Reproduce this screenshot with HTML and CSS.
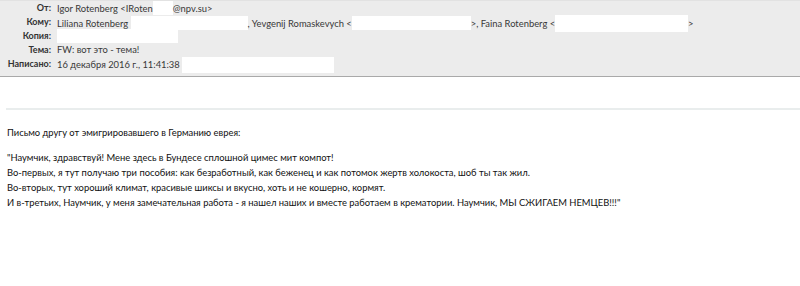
FILE: index.html
```html
<!DOCTYPE html>
<html lang="ru">
<head>
    <meta charset="UTF-8">
    <meta name="viewport" content="width=device-width, initial-scale=1.0">
    <title>FW: вот это - тема!</title>
    <link rel="stylesheet" href="styles.css">
</head>
<body>
    <div class="header">
        <div class="row">
            <span class="label">От:</span>
            <span class="value">Igor Rotenberg &lt;IRoten<span class="hide w-from"></span>@npv.su&gt;</span>
        </div>
        <div class="row">
            <span class="label">Кому:</span>
            <span class="value">Liliana Rotenberg <span class="hide w-to1"></span>, Yevgenij Romaskevych &lt;<span class="hide w-to2"></span>&gt;, Faina Rotenberg &lt;<span class="hide w-to3"></span>&gt;</span>
        </div>
        <div class="row">
            <span class="label">Копия:</span>
            <span class="value"><span class="hide w-cc"></span></span>
        </div>
        <div class="row">
            <span class="label">Тема:</span>
            <span class="value">FW: вот это - тема!</span>
        </div>
        <div class="row">
            <span class="label">Написано:</span>
            <span class="value">16 декабря 2016 г., 11:41:38 <span class="hide w-date"></span></span>
        </div>
    </div>

    <hr class="divider">

    <div class="message">
        <p>Письмо другу от эмигрировавшего в Германию еврея:</p>
        <p>"Наумчик, здравствуй! Мене здесь в Бундесе сплошной цимес мит компот!<br>
        Во-первых, я тут получаю три пособия: как безработный, как беженец и как потомок жертв холокоста, шоб ты так жил.<br>
        Во-вторых, тут хороший климат, красивые шиксы и вкусно, хоть и не кошерно, кормят.<br>
        И в-третьих, Наумчик, у меня замечательная работа - я нашел наших и вместе работаем в крематории. Наумчик, МЫ СЖИГАЕМ НЕМЦЕВ!!!"</p>
    </div>
</body>
</html>
```

FILE: styles.css
```css
body {
    margin: 0;
    font-family: Lato, "Open Sans", sans-serif;
    font-size: 9.4px;
    color: #222;
    background-color: #fff;
}
.header {
    background-color: #ececec;
    border-top: 1px solid #e2e2e2;
    border-bottom: 1px solid #a9a9a9;
    padding: 0 0 5px;
}
.row {
    display: flex;
    height: 14px;
    line-height: 14px;
    white-space: nowrap;
}
.label {
    width: 51px;
    text-align: right;
    font-size: 9px;
    font-weight: bold;
    color: #333;
    margin-right: 6px;
}
.value {
    color: #383838;
}
.hide {
    display: inline-block;
    background-color: #fff;
    height: 14px;
    vertical-align: -3px;
}
.w-from { width: 20px; }
.w-to1 { width: 117px; }
.w-to2 { width: 119px; }
.w-to3 { width: 133px; height: 17px; vertical-align: -5px; }
.w-cc { width: 121px; }
.w-date { width: 152px; height: 16px; vertical-align: -5px; }
.divider {
    margin: 31px 0 0 6px;
    border: none;
    border-top: 2px solid #e9eded;
}
.message {
    padding: 15px 7px 0;
    color: #111;
}
.message p {
    margin: 0 0 10px;
    line-height: 15px;
}
```
